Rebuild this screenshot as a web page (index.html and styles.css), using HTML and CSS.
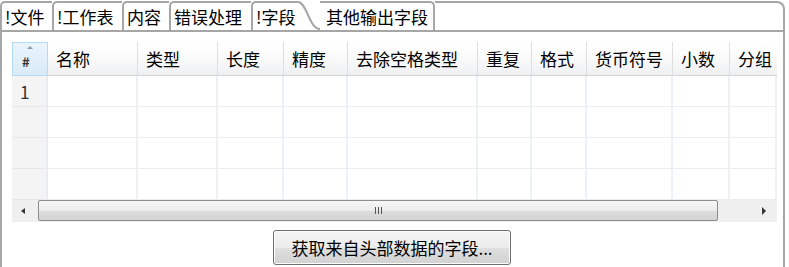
FILE: index.html
```html
<!DOCTYPE html>
<html lang="zh-CN">
<head>
<meta charset="utf-8">
<title>字段</title>
<link rel="stylesheet" href="styles.css">
</head>
<body>
<div class="folder">
  <div class="tabs">
    <div class="tab tab-file">!文件</div>
    <div class="tab tab-sheet">!工作表</div>
    <div class="tab tab-content">内容</div>
    <div class="tab tab-error">错误处理</div>
    <div class="tab-sel">
      <div class="tab-sel-label">!字段</div>
      <svg class="tab-curve" width="22" height="29" viewBox="0 0 22 29"><path d="M0 1 C 9 1, 11 28, 22 28" fill="none" stroke="#a6a6a6" stroke-width="2"/></svg>
    </div>
    <div class="tab tab-last">其他输出字段</div>
    <div class="tab-filler"></div>
  </div>
  <div class="panel">
    <div class="grid">
      <div class="hc hc-num"><span class="sort-up"></span>#</div>
      <div class="hc">名称</div>
      <div class="hc">类型</div>
      <div class="hc">长度</div>
      <div class="hc">精度</div>
      <div class="hc">去除空格类型</div>
      <div class="hc">重复</div>
      <div class="hc">格式</div>
      <div class="hc">货币符号</div>
      <div class="hc">小数</div>
      <div class="hc hc-last">分组</div>

      <div class="c rn">1</div><div class="c"></div><div class="c"></div><div class="c"></div><div class="c"></div><div class="c"></div><div class="c"></div><div class="c"></div><div class="c"></div><div class="c"></div><div class="c"></div>
      <div class="c rn"></div><div class="c"></div><div class="c"></div><div class="c"></div><div class="c"></div><div class="c"></div><div class="c"></div><div class="c"></div><div class="c"></div><div class="c"></div><div class="c"></div>
      <div class="c rn"></div><div class="c"></div><div class="c"></div><div class="c"></div><div class="c"></div><div class="c"></div><div class="c"></div><div class="c"></div><div class="c"></div><div class="c"></div><div class="c"></div>
      <div class="c rn"></div><div class="c"></div><div class="c"></div><div class="c"></div><div class="c"></div><div class="c"></div><div class="c"></div><div class="c"></div><div class="c"></div><div class="c"></div><div class="c"></div>
    </div>
    <div class="hscroll">
      <div class="sb-btn"><span class="arrow-left"></span></div>
      <div class="thumb"><span class="grip"></span><span class="grip"></span><span class="grip"></span></div>
      <div class="sb-track"></div>
      <div class="sb-btn sb-btn-right"><span class="arrow-right"></span></div>
    </div>
    <div class="actions">
      <button class="btn" type="button">获取来自头部数据的字段...</button>
    </div>
  </div>
</div>
</body>
</html>
```
FILE: styles.css
```css
* { box-sizing: border-box; }

body {
  margin: 0;
  background: #ffffff;
  font-family: "Noto Sans CJK SC", "Noto Sans", sans-serif;
  font-size: 17px;
  color: #000000;
  overflow: hidden;
}

.folder {
  width: 785px;
  padding-top: 1px;
}

.tabs {
  display: flex;
  height: 29px;
}

.tab {
  border-top: 2px solid #a6a6a6;
  border-left: 2px solid #a6a6a6;
  border-top-left-radius: 5px;
  padding: 1px 0 0 3px;
  line-height: 25px;
  white-space: nowrap;
  background: #ffffff;
}

.tab-file { width: 52px; }
.tab-sheet { width: 70px; }
.tab-content { width: 47px; }
.tab-error { width: 82px; }

.tab-sel {
  display: flex;
  width: 69px;
}

.tab-sel-label {
  flex: 1;
  border-top: 2px solid #a6a6a6;
  border-left: 2px solid #a6a6a6;
  border-top-left-radius: 5px;
  padding: 1px 0 0 3px;
  line-height: 25px;
  white-space: nowrap;
}

.tab-curve {
  display: block;
  flex: none;
}

.tab-last {
  width: 115px;
  border-left: none;
  border-right: 2px solid #a6a6a6;
  border-top-left-radius: 0;
  border-top-right-radius: 5px;
  padding-left: 6px;
}

.tab-filler {
  flex: 1;
  border-top: 2px solid #a6a6a6;
  border-right: 2px solid #a6a6a6;
  border-top-right-radius: 8px;
}

.panel {
  border: 2px solid #a6a6a6;
  height: 240px;
  padding: 10px 6px 0 10px;
}

.grid {
  display: grid;
  grid-template-columns: 36px 90px 80px 66px 64px 130px 54px 55px 86px 57px 47px;
  grid-template-rows: 34px repeat(4, 31px);
  width: 765px;
}

.hc {
  position: relative;
  background: linear-gradient(#ffffff 0%, #fbfbfb 45%, #eef0f2 100%);
  border-right: 1px solid #dedede;
  border-bottom: 1px solid #d2d4d6;
  padding-left: 8px;
  line-height: 34px;
  white-space: nowrap;
  overflow: hidden;
}

.hc-last {
  border-right: none;
}

.hc-num {
  background: linear-gradient(#eaf4fc, #d9ebf8);
  border: 1px solid #b4daf4;
  padding-left: 9px;
  font-size: 13px;
  font-weight: bold;
  line-height: 38px;
  color: #333333;
}

.sort-up {
  position: absolute;
  left: 14px;
  top: 3px;
  width: 0;
  height: 0;
  border-left: 3px solid transparent;
  border-right: 3px solid transparent;
  border-bottom: 3px solid #8a9aa8;
}

.c {
  border-right: 2px solid #eaf1f8;
  border-bottom: 1px solid #ececec;
  background: #ffffff;
}

.rn {
  background: #f4f4f4;
  border-right: 2px solid #e9edf1;
  border-bottom: 1px solid #e8e8e8;
  padding-left: 8px;
  line-height: 32px;
  color: #333333;
}

.hscroll {
  display: flex;
  height: 22px;
  width: 765px;
  background: #efefef;
  align-items: stretch;
}

.sb-btn {
  width: 26px;
  display: flex;
  align-items: center;
  padding-left: 9px;
}

.sb-btn-right {
  width: 24px;
  padding-left: 9px;
}

.arrow-left {
  width: 0;
  height: 0;
  border-top: 3px solid transparent;
  border-bottom: 3px solid transparent;
  border-right: 4px solid #333333;
}

.arrow-right {
  width: 0;
  height: 0;
  border-top: 4px solid transparent;
  border-bottom: 4px solid transparent;
  border-left: 4px solid #333333;
}

.thumb {
  width: 680px;
  border: 1px solid #8c8c8c;
  border-radius: 2px;
  background: linear-gradient(#f7f7f7 0%, #ececec 50%, #dcdcdc 51%, #d4d4d4 100%);
  display: flex;
  align-items: center;
  justify-content: center;
  gap: 2px;
  margin-bottom: 1px;
}

.grip {
  width: 1px;
  height: 7px;
  background: #555555;
}

.sb-track {
  flex: 1;
}

.actions {
  display: flex;
  justify-content: center;
  padding-right: 5px;
  margin-top: 8px;
  width: 765px;
}

.btn {
  width: 238px;
  height: 35px;
  border: 1px solid #707070;
  border-radius: 3px;
  background: linear-gradient(#f4f4f4 0%, #ececec 50%, #dfdfdf 51%, #d2d2d2 100%);
  box-shadow: inset 0 0 0 1px #fbfbfb;
  font-family: "Noto Sans CJK SC", "Noto Sans", sans-serif;
  font-size: 17px;
  color: #000000;
  line-height: 33px;
  padding: 0;
}
```
